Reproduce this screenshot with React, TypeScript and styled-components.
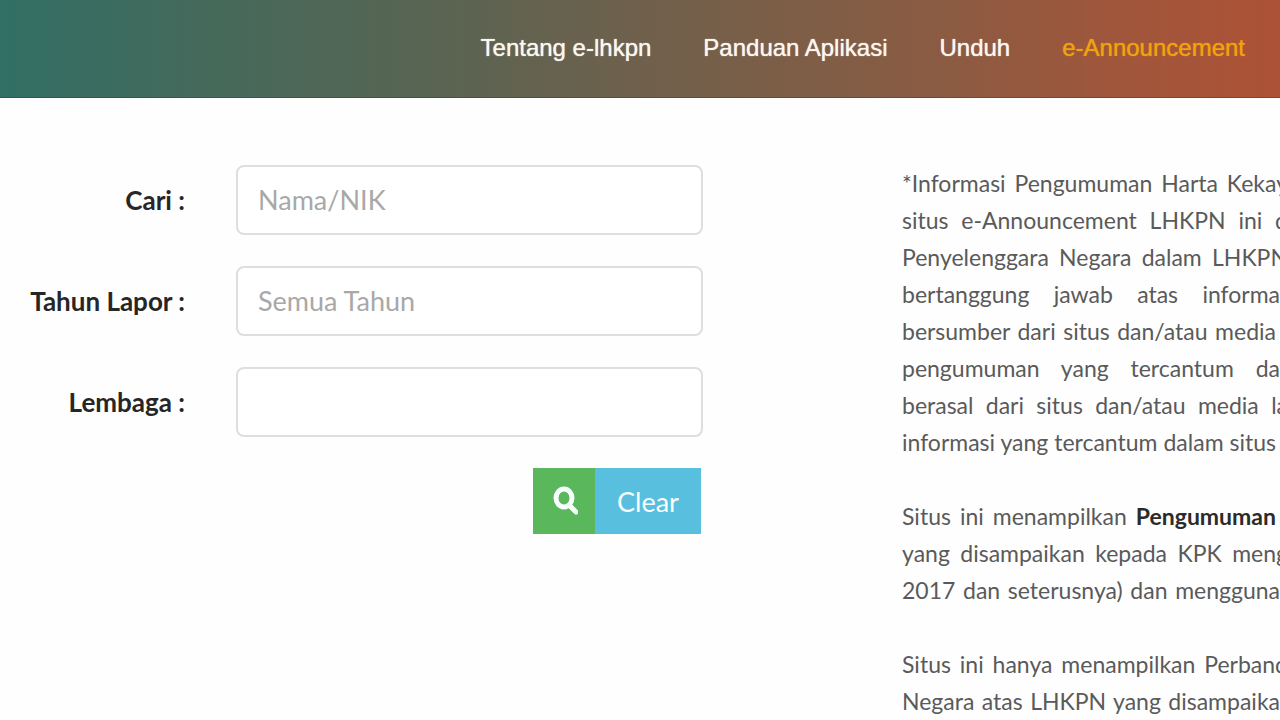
import React from "react";
import styled, { createGlobalStyle } from "styled-components";

const GlobalStyle = createGlobalStyle`
  *, *::before, *::after { box-sizing: border-box; }
  body {
    margin: 0;
    background: #fefefe;
    color: #5a5a5a;
    font-family: Lato, "Open Sans", sans-serif;
    overflow-x: hidden;
  }
`;

const Header = styled.header`
  display: flex;
  justify-content: flex-end;
  align-items: center;
  height: 98px;
  padding: 0 35px 2px;
  border-bottom: 1px solid rgba(60, 50, 40, 0.4);
  background: linear-gradient(90deg, #326f65 0%, #47695a 18%, #5d6351 37%, #72604b 52%, #8b5b42 74%, #a1563b 88%, #ad5236 100%);
`;

const Nav = styled.nav`
  display: flex;
  gap: 52px;
`;

const NavLink = styled.a<{ $active?: boolean }>`
  color: ${(p) => (p.$active ? "#f0a30f" : "#fbf7f0")};
  font: 24px/32px "Liberation Sans", Arial, sans-serif;
  text-decoration: none;
  text-shadow: 0 0 1px currentColor;
  white-space: nowrap;
`;

const Main = styled.main`
  display: grid;
  grid-template-columns: minmax(0, 703fr) minmax(0, 378fr);
  column-gap: 199px;
  padding-top: 67px;
`;

const SearchForm = styled.form`
  display: flex;
  flex-direction: column;
  gap: 31px;
`;

const Field = styled.div`
  display: grid;
  grid-template-columns: 185px minmax(0, 1fr);
  column-gap: 51px;
  align-items: center;
`;

const Label = styled.label`
  color: #262626;
  font-size: 26px;
  font-weight: 700;
  line-height: 32px;
  text-align: right;
  white-space: nowrap;
`;

const TextBox = styled.input`
  width: 100%;
  height: 70px;
  padding: 0 20px 2px;
  border: 2px solid #dedede;
  border-radius: 8px;
  background: #fff;
  color: #444;
  font-family: inherit;
  font-size: 27px;
  outline: none;

  &::placeholder {
    color: #a8a8a8;
    opacity: 1;
  }
`;

const Actions = styled.div`
  display: flex;
  justify-content: flex-end;
  padding-right: 2px;
`;

const Button = styled.button<{ $tone: "search" | "clear" }>`
  display: flex;
  align-items: center;
  justify-content: center;
  width: ${(p) => (p.$tone === "search" ? "62px" : "106px")};
  height: 66px;
  padding: 0;
  border: 0;
  background: ${(p) => (p.$tone === "search" ? "#5ab75c" : "#59bfde")};
  color: #f8fdfd;
  font-family: inherit;
  font-size: 27px;
`;

const Info = styled.section`
  display: flex;
  flex-direction: column;
  gap: 37px;
`;

const Paragraph = styled.p`
  margin: 0;
  font-size: 23px;
  line-height: 37px;

  strong { color: #2b2b2b; }
`;

type LineEnd = "inset" | "flush" | "bleed";

const lineMargins: Record<LineEnd, string> = { inset: "4px", flush: "0", bleed: "-8px" };

const Line = styled.span<{ $end: LineEnd }>`
  display: block;
  margin-right: ${(p) => lineMargins[p.$end]};
  text-align: justify;
  text-align-last: justify;
  white-space: nowrap;
`;

type InfoLine = { text: string; strong?: string; end?: LineEnd };

const paragraphs: InfoLine[][] = [
  [
    { text: "*Informasi Pengumuman Harta Kekay", end: "bleed" },
    { text: "situs e-Announcement LHKPN ini d", end: "bleed" },
    { text: "Penyelenggara Negara dalam LHKPN", end: "bleed" },
    { text: "bertanggung jawab atas informa", end: "flush" },
    { text: "bersumber dari situs dan/atau media" },
    { text: "pengumuman yang tercantum da", end: "flush" },
    { text: "berasal dari situs dan/atau media la", end: "bleed" },
    { text: "informasi yang tercantum dalam situs" },
  ],
  [
    { text: "Situs ini menampilkan ", strong: "Pengumuman" },
    { text: "yang disampaikan kepada KPK meng", end: "bleed" },
    { text: "2017 dan seterusnya) dan mengguna", end: "flush" },
  ],
  [
    { text: "Situs ini hanya menampilkan Perband", end: "bleed" },
    { text: "Negara atas LHKPN yang disampaika", end: "flush" },
  ],
];

const SearchIcon = () => (
  <svg width="28" height="32" viewBox="0 0 28 32" fill="none" stroke="currentColor" aria-hidden="true">
    <ellipse cx="14" cy="13" rx="8" ry="9" strokeWidth="5" />
    <path d="M20 21 L26 27" strokeWidth="5" strokeLinecap="round" />
  </svg>
);

export default function App() {
  return (
    <>
      <GlobalStyle />
      <Header>
        <Nav>
          <NavLink href="#tentang">Tentang e-lhkpn</NavLink>
          <NavLink href="#panduan">Panduan Aplikasi</NavLink>
          <NavLink href="#unduh">Unduh</NavLink>
          <NavLink href="#announcement" $active>e-Announcement</NavLink>
        </Nav>
      </Header>
      <Main>
        <SearchForm onSubmit={(e) => e.preventDefault()}>
          <Field>
            <Label htmlFor="cari">Cari :</Label>
            <TextBox id="cari" placeholder="Nama/NIK" />
          </Field>
          <Field>
            <Label htmlFor="tahun">Tahun Lapor :</Label>
            <TextBox id="tahun" placeholder="Semua Tahun" />
          </Field>
          <Field>
            <Label htmlFor="lembaga">Lembaga :</Label>
            <TextBox id="lembaga" />
          </Field>
          <Actions>
            <Button type="submit" $tone="search" aria-label="Cari"><SearchIcon /></Button>
            <Button type="reset" $tone="clear">Clear</Button>
          </Actions>
        </SearchForm>
        <Info>
          {paragraphs.map((lines, i) => (
            <Paragraph key={i}>
              {lines.map((line) => (
                <Line key={line.text} $end={line.end ?? "inset"}>
                  {line.text}
                  {line.strong && <strong>{line.strong}</strong>}
                </Line>
              ))}
            </Paragraph>
          ))}
        </Info>
      </Main>
    </>
  );
}
